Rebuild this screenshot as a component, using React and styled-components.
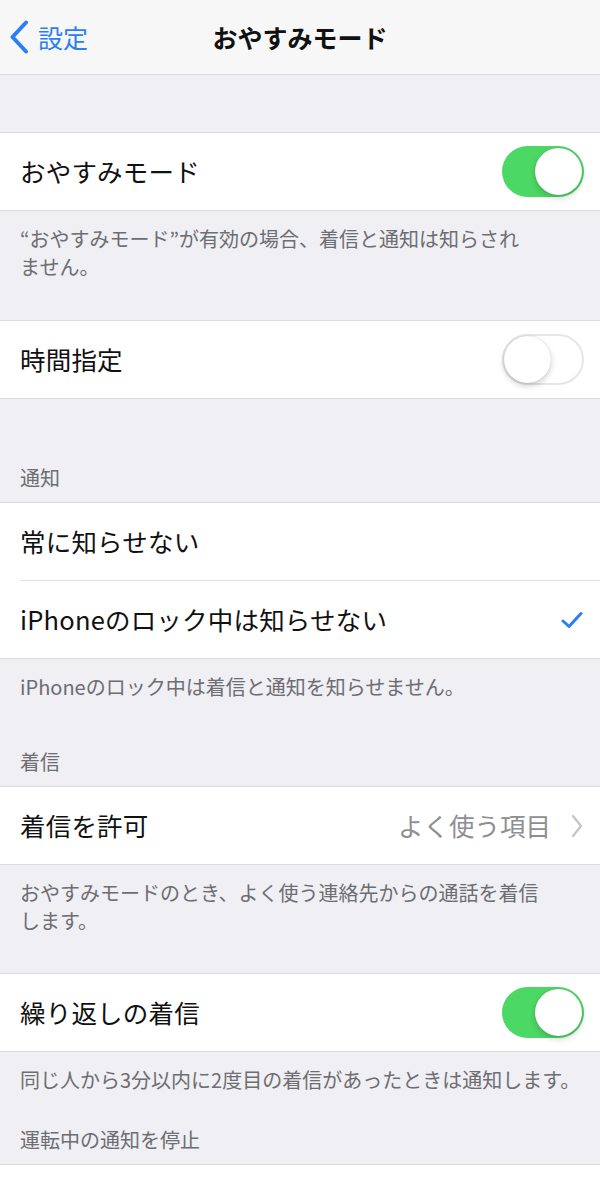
import React from "react";
import styled, { createGlobalStyle } from "styled-components";

const Global = createGlobalStyle`
  html, body { margin: 0; padding: 0; }
  body {
    background: #efeff4;
    font-family: "Noto Sans CJK JP", "Noto Sans", sans-serif;
    -webkit-font-smoothing: antialiased;
  }
`;

const Page = styled.div`
  width: 600px;
  height: 1186px;
  background: #efeff4;
  overflow: hidden;
`;

const NavBar = styled.header`
  height: 74px;
  background: #f7f7f8;
  border-bottom: 1px solid #dcdce0;
  display: grid;
  grid-template-columns: 1fr auto 1fr;
  align-items: center;
`;

const BackButton = styled.div`
  display: flex;
  align-items: center;
  gap: 9px;
  padding-left: 9px;
  color: #2a7ff6;
  font-size: 25px;
  line-height: 1;
`;

const NavTitle = styled.h1`
  margin: 0;
  font-size: 25px;
  font-weight: 700;
  color: #111;
  line-height: 1;
`;

const Spacer = styled.div`
  height: ${(p) => p.$h}px;
`;

const Group = styled.section`
  background: #fff;
  border-top: 1px solid #dcdce0;
  border-bottom: 1px solid #dcdce0;
`;

const Cell = styled.div`
  height: 77px;
  display: flex;
  align-items: center;
  padding: 0 16px 0 20px;
`;

const CellDivider = styled.div`
  height: 1px;
  margin-left: 20px;
  background: #e2e2e6;
`;

const Label = styled.span`
  flex: 1;
  font-size: 25.5px;
  color: #111;
  line-height: 1.2;
  letter-spacing: 0.2px;
`;

const Detail = styled.span`
  font-size: 25.5px;
  color: #8e8e93;
  line-height: 1.2;
  margin-right: 20px;
`;

const Track = styled.div`
  width: 82px;
  height: 51px;
  box-sizing: border-box;
  border-radius: 26px;
  display: flex;
  align-items: center;
  justify-content: ${(p) => (p.$on ? "flex-end" : "flex-start")};
  padding: 2px;
  background: ${(p) => (p.$on ? "#4cd864" : "#fff")};
  border: ${(p) => (p.$on ? "none" : "2px solid #e6e6e9")};
`;

const Knob = styled.div`
  width: 47px;
  height: 47px;
  border-radius: 50%;
  background: #fff;
  box-shadow: 0 3px 6px rgba(0, 0, 0, 0.18), 0 0 1px rgba(0, 0, 0, 0.25);
  margin: ${(p) => (p.$on ? "0" : "-2px")};
`;

const Footer = styled.div`
  padding: 14px 0 ${(p) => p.$pb || 0}px 20px;
  font-size: 20px;
  line-height: 28px;
  color: #6d6d72;
  white-space: nowrap;
`;

const Header = styled.div`
  padding: ${(p) => p.$pt}px 20px 12px;
  font-size: 20px;
  line-height: 24px;
  color: #6d6d72;
`;

const Toggle = ({ on }) => (
  <Track $on={on}>
    <Knob $on={on} />
  </Track>
);

const BackChevron = () => (
  <svg width="20" height="34" viewBox="0 0 20 34">
    <polyline
      points="17,2.5 3.5,17 17,31.5"
      fill="none"
      stroke="#2a7ff6"
      strokeWidth="4"
      strokeLinecap="round"
      strokeLinejoin="round"
    />
  </svg>
);

const Check = () => (
  <svg width="22" height="18" viewBox="0 0 22 18" style={{ marginRight: 1 }}>
    <polyline
      points="2,10 8,15.5 20,2.5"
      fill="none"
      stroke="#2a7ff6"
      strokeWidth="3"
      strokeLinecap="round"
      strokeLinejoin="round"
    />
  </svg>
);

const Chevron = () => (
  <svg width="12" height="24" viewBox="0 0 12 24" style={{ marginRight: 1 }}>
    <polyline
      points="2,2 10,12 2,22"
      fill="none"
      stroke="#c4c4c8"
      strokeWidth="2.2"
      strokeLinecap="round"
      strokeLinejoin="round"
    />
  </svg>
);

export default function App() {
  return (
    <Page>
      <Global />
      <NavBar>
        <BackButton>
          <BackChevron />
          <span>設定</span>
        </BackButton>
        <NavTitle>おやすみモード</NavTitle>
        <div />
      </NavBar>

      <Spacer $h={57} />
      <Group>
        <Cell>
          <Label>おやすみモード</Label>
          <Toggle on />
        </Cell>
      </Group>
      <Footer $pb={39}>
        “おやすみモード”が有効の場合、着信と通知は知らされ
        <br />
        ません。
      </Footer>

      <Group>
        <Cell>
          <Label>時間指定</Label>
          <Toggle on={false} />
        </Cell>
      </Group>

      <Header $pt={67}>通知</Header>
      <Group>
        <Cell>
          <Label>常に知らせない</Label>
        </Cell>
        <CellDivider />
        <Cell>
          <Label>iPhoneのロック中は知らせない</Label>
          <Check />
        </Cell>
      </Group>
      <Footer>iPhoneのロック中は着信と通知を知らせません。</Footer>

      <Header $pt={49}>着信</Header>
      <Group>
        <Cell>
          <Label>着信を許可</Label>
          <Detail>よく使う項目</Detail>
          <Chevron />
        </Cell>
      </Group>
      <Footer $pb={38}>
        おやすみモードのとき、よく使う連絡先からの通話を着信
        <br />
        します。
      </Footer>

      <Group>
        <Cell>
          <Label>繰り返しの着信</Label>
          <Toggle on />
        </Cell>
      </Group>
      <Footer>同じ人から3分以内に2度目の着信があったときは通知します。</Footer>

      <Header $pt={34}>運転中の通知を停止</Header>
      <Group>
        <Cell>
          <Label></Label>
        </Cell>
      </Group>
    </Page>
  );
}
